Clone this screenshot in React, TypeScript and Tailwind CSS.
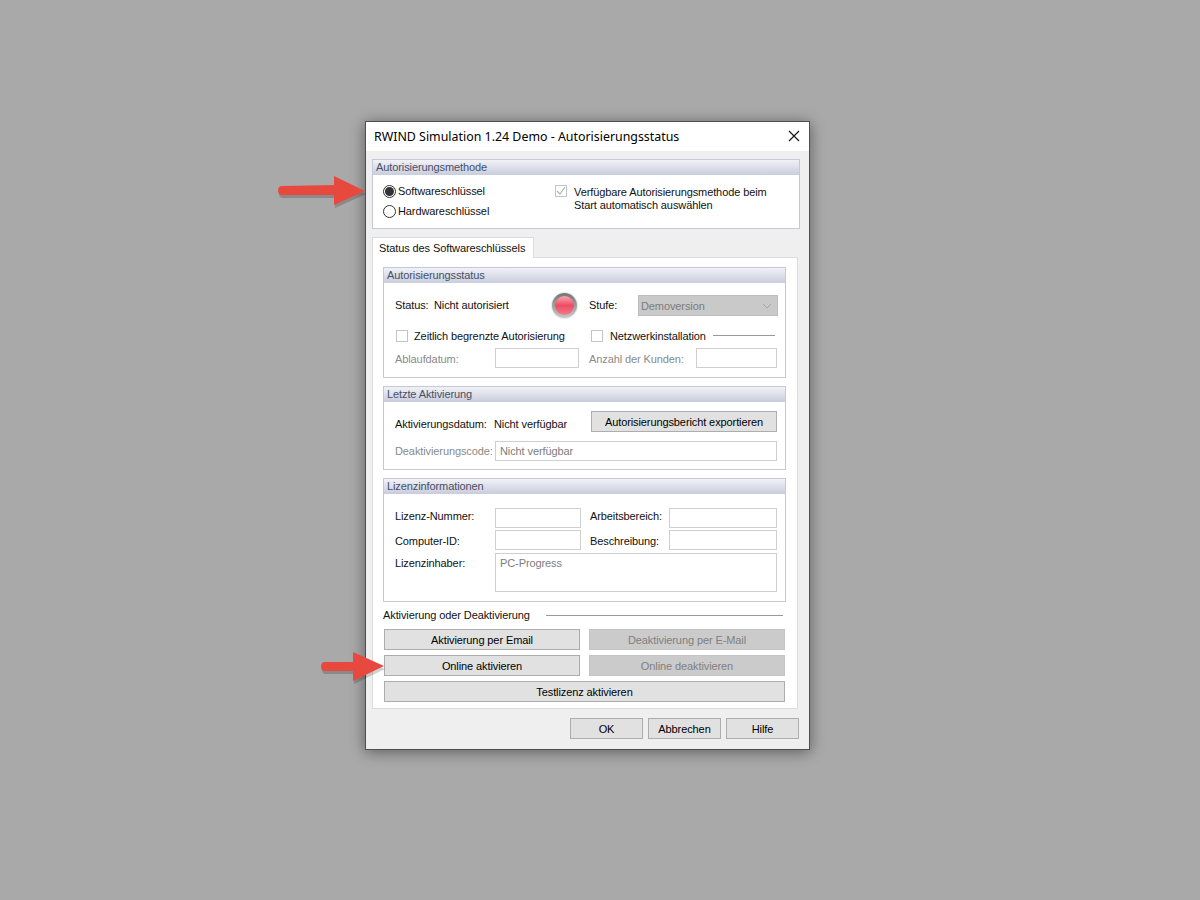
import type { ReactNode } from "react";

function Arrow({ className, w, h, d }: { className: string; w: number; h: number; d: string }) {
  return (
    <svg className={className} width={w} height={h} viewBox={`0 0 ${w} ${h}`}>
      <path d={d} fill="#000" opacity="0.18" transform="translate(1 3)" />
      <path d={d} fill="#e8493f" />
    </svg>
  );
}

function Group({ title, className, children }: { title: string; className?: string; children: ReactNode }) {
  return (
    <div className={`border border-[#c6c8d9] bg-white ${className ?? ""}`}>
      <div className="h-[15px] leading-[14px] pl-[3px] text-[#474f66] bg-gradient-to-b from-[#f1f2f7] to-[#c9ccdd]">
        {title}
      </div>
      {children}
    </div>
  );
}

function Box({ className, children }: { className?: string; children?: ReactNode }) {
  return <div className={`border border-[#cfcfcf] bg-white text-[#7d7d7d] pl-1 ${className ?? ""}`}>{children}</div>;
}

function Check({ checked }: { checked?: boolean }) {
  return (
    <div className="w-[12px] h-[12px] border border-[#c4c4c4] bg-white shrink-0 flex items-center justify-center">
      {checked && (
        <svg width="10" height="10" viewBox="0 0 10 10">
          <path d="M1 5l3 3 5-7" fill="none" stroke="#b5b5b5" strokeWidth="1.2" />
        </svg>
      )}
    </div>
  );
}

function Radio({ checked }: { checked?: boolean }) {
  return (
    <div className="w-[13px] h-[13px] rounded-full border border-[#333] bg-white flex items-center justify-center shrink-0">
      {checked && <div className="w-[9px] h-[9px] rounded-full bg-[#333]" />}
    </div>
  );
}

function Btn({ disabled, className, children }: { disabled?: boolean; className?: string; children: ReactNode }) {
  return (
    <div
      className={`h-[21px] pt-[2px] flex items-center justify-center border ${
        disabled ? "bg-[#cbcbcb] border-[#c4c4c4] text-[#808080]" : "bg-[#e1e1e1] border-[#adadad] text-black"
      } ${className ?? ""}`}
    >
      {children}
    </div>
  );
}

export default function App() {
  return (
    <div
      className="relative h-[900px] bg-[#a9a9a9] pt-[121px] pl-[365px] overflow-hidden text-[11px] tracking-[-0.1px] text-[#111]"
      style={{ fontFamily: '"Liberation Sans", sans-serif' }}
    >
      <div className="w-[445px] h-[629px] border border-[#4f4f4f] bg-[#efefef] shadow-[0_2px_14px_rgba(0,0,0,0.45)]">
        {/* title bar */}
        <div
          className="h-[29px] bg-white flex items-center justify-between pl-[8px] pr-[9px] text-[12.4px] tracking-normal text-black"
          style={{ fontFamily: '"Noto Sans", sans-serif' }}
        >
          <span className="pt-[2px]">RWIND Simulation 1.24 Demo - Autorisierungsstatus</span>
          <svg className="mb-[2px]" width="12" height="12" viewBox="0 0 12 12">
            <path d="M1 1l10 10M11 1L1 11" stroke="#111" strokeWidth="1.1" fill="none" />
          </svg>
        </div>

        <div className="pt-[8px] pl-[6px]">
          <Group title="Autorisierungsmethode" className="w-[428px] h-[70px]">
            <div className="flex pt-[10px] pl-[10px]">
              <div className="w-[172px] flex flex-col gap-[7px]">
                <div className="flex items-center gap-[2px] h-[13px]">
                  <Radio checked />
                  <span>Softwareschlüssel</span>
                </div>
                <div className="flex items-center gap-[2px] h-[13px]">
                  <Radio />
                  <span>Hardwareschlüssel</span>
                </div>
              </div>
              <div className="flex gap-[7px]">
                <Check checked />
                <div className="leading-[13px] pt-[1px]">
                  Verfügbare Autorisierungsmethode beim
                  <br />
                  Start automatisch auswählen
                </div>
              </div>
            </div>
          </Group>

          {/* tab */}
          <div className="mt-[8px] w-[162px] h-[21px] relative z-10 bg-white border border-b-0 border-[#dcdcdc] flex items-center pl-[6px] whitespace-nowrap">
            Status des Softwareschlüssels
          </div>
          <div className="-mt-[1px] w-[426px] h-[452px] bg-white border border-[#dcdcdc] pt-[9px] pl-[10px]">
            <Group title="Autorisierungsstatus" className="w-[403px] h-[111px]">
              <div className="flex items-center h-[21px] mt-[12px] pl-[11px]">
                <span className="w-[39px]">Status:</span>
                <span className="w-[117px]">Nicht autorisiert</span>
                <div className="w-[25px] h-[25px] ml-px -mr-px rounded-full bg-gradient-to-b from-[#757575] to-[#c9c9c9] shadow-[0_0_2px_rgba(120,120,120,0.6)] flex items-center justify-center">
                  <div className="w-[19px] h-[19px] rounded-full bg-gradient-to-b from-[#f6a3ae] via-[#ee4a62] to-[#f07a8c]" />
                </div>
                <span className="ml-[13px] w-[49px]">Stufe:</span>
                <div className="w-[140px] h-[21px] bg-[#c9c9c9] border border-[#bdbdbd] text-[#7c7c7c] flex items-center justify-between pl-[2px] pr-[5px]">
                  <span className="pt-[2px]">Demoversion</span>
                  <svg width="10" height="6" viewBox="0 0 10 6">
                    <path d="M1 1l4 4 4-4" stroke="#a5a5a5" fill="none" />
                  </svg>
                </div>
              </div>
              <div className="flex items-center h-[12px] mt-[14px] pl-[12px]">
                <Check />
                <span className="ml-[6px] w-[177px]">Zeitlich begrenzte Autorisierung</span>
                <Check />
                <span className="ml-[7px] w-[97px]">Netzwerkinstallation</span>
                <div className="ml-[6px] w-[62px] h-px bg-[#9a9a9a] -mt-[2px]" />
              </div>
              <div className="flex items-center h-[20px] mt-[6px] pl-[11px] text-[#8a8a8a]">
                <span className="w-[100px] mt-[2px]">Ablaufdatum:</span>
                <Box className="w-[84px] h-[20px]" />
                <span className="ml-[10px] w-[107px] mt-[2px]">Anzahl der Kunden:</span>
                <Box className="w-[81px] h-[20px]" />
              </div>
            </Group>

            <Group title="Letzte Aktivierung" className="w-[403px] h-[84px] mt-[8px]">
              <div className="flex items-center h-[21px] mt-[9px] pl-[11px]">
                <span className="w-[99px] mt-[6px]">Aktivierungsdatum:</span>
                <span className="w-[97px] mt-[6px]">Nicht verfügbar</span>
                <Btn className="w-[186px] text-[#222]">Autorisierungsbericht exportieren</Btn>
              </div>
              <div className="flex items-center h-[20px] mt-[9px] pl-[11px]">
                <span className="w-[100px] text-[#8a8a8a]">Deaktivierungscode:</span>
                <Box className="w-[282px] h-[20px] leading-[18px]">Nicht verfügbar</Box>
              </div>
            </Group>

            <Group title="Lizenzinformationen" className="w-[403px] h-[124px] mt-[8px]">
              <div className="flex items-center h-[20px] mt-[14px] pl-[11px]">
                <span className="w-[100px] mb-[4px]">Lizenz-Nummer:</span>
                <Box className="w-[86px] h-[20px]" />
                <span className="ml-[9px] w-[79px] mb-[4px]">Arbeitsbereich:</span>
                <Box className="w-[108px] h-[20px]" />
              </div>
              <div className="flex items-center h-[20px] mt-[2px] pl-[11px]">
                <span className="w-[100px] mt-[2px]">Computer-ID:</span>
                <Box className="w-[86px] h-[20px]" />
                <span className="ml-[9px] w-[79px] mt-[2px]">Beschreibung:</span>
                <Box className="w-[108px] h-[20px]" />
              </div>
              <div className="flex h-[39px] mt-[3px] pl-[11px]">
                <span className="w-[100px] leading-[20px]">Lizenzinhaber:</span>
                <Box className="w-[282px] h-[39px] leading-[18px]">PC-Progress</Box>
              </div>
            </Group>

            <div className="flex items-center h-[14px] mt-[6px]">
              <span className="w-[163px]">Aktivierung oder Deaktivierung</span>
              <div className="w-[237px] h-px bg-[#9a9a9a]" />
            </div>

            <div className="grid grid-cols-[196px_196px] gap-x-[9px] gap-y-[5px] mt-[7px] ml-px w-[401px]">
              <Btn>Aktivierung per Email</Btn>
              <Btn disabled>Deaktivierung per E-Mail</Btn>
              <Btn>Online aktivieren</Btn>
              <Btn disabled>Online deaktivieren</Btn>
              <Btn className="col-span-2">Testlizenz aktivieren</Btn>
            </div>
          </div>

          <div className="flex gap-[5px] mt-[9px] ml-[198px]">
            <Btn className="w-[73px]">OK</Btn>
            <Btn className="w-[73px]">Abbrechen</Btn>
            <Btn className="w-[73px]">Hilfe</Btn>
          </div>
        </div>
      </div>

      <Arrow
        className="absolute left-[276px] top-[174px]"
        w={92}
        h={36}
        d="M6 12 L58 11 L58 2 L89 17 L58 31 L58 21 L6 21 Q2 21 2 16.5 Q2 12 6 12 Z"
      />
      <Arrow
        className="absolute left-[319px] top-[650px]"
        w={68}
        h={36}
        d="M6 12 L34 12 L34 2 L65 16 L34 31 L34 21 L6 21 Q2 21 2 16.5 Q2 12 6 12 Z"
      />
    </div>
  );
}
